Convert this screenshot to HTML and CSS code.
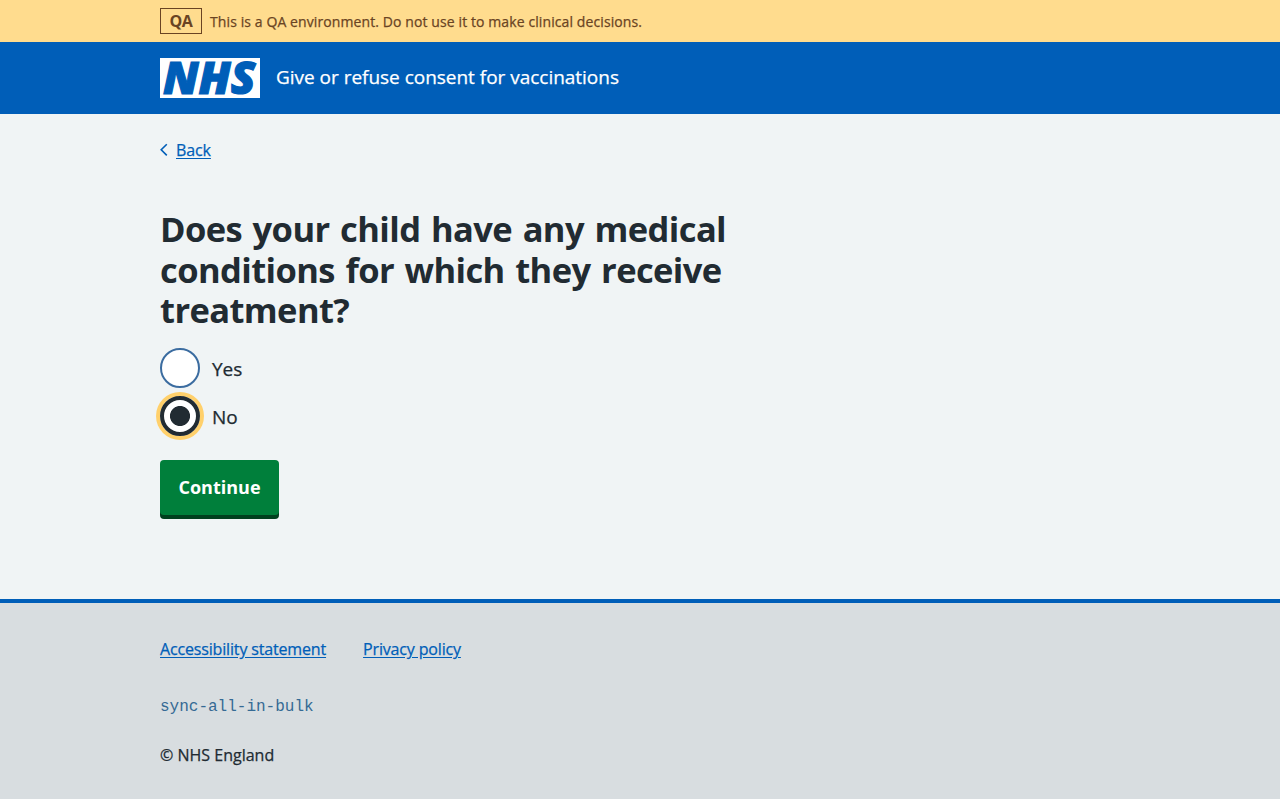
FILE: index.html
```html
<!DOCTYPE html>
<html lang="en">
<head>
<meta charset="utf-8">
<title>Give or refuse consent for vaccinations</title>
<link rel="stylesheet" href="styles.css">
</head>
<body>
<div class="environment">
  <div class="container environment-inner">
    <strong class="tag">QA</strong>
    <span class="environment-text">This is a QA environment. Do not use it to make clinical decisions.</span>
  </div>
</div>
<header class="header">
  <div class="container header-inner">
    <svg class="logo" width="100" height="40" viewBox="0 0 100 40" role="img" aria-label="NHS">
      <rect width="100" height="40" fill="#fff"/>
      <text class="logo-text" x="3" y="35.8" textLength="92.5" lengthAdjust="spacingAndGlyphs">NHS</text>
    </svg>
    <span class="service">Give or refuse consent for vaccinations</span>
  </div>
</header>
<main class="container main">
  <div class="back">
    <svg class="chevron" width="8" height="14" viewBox="0 0 8 14" aria-hidden="true"><path d="M6.8 1.2 1.2 6.8l5.6 5.6" fill="none" stroke="#005eb8" stroke-width="1.6"/></svg>
    <a class="link back-link" href="#">Back</a>
  </div>
  <form>
    <h1 class="title">Does your child have any medical<br>conditions for which they receive<br>treatment?</h1>
    <div class="radios">
      <label class="radio"><input class="radio-input" type="radio" name="condition"><span class="radio-text">Yes</span></label>
      <label class="radio"><input class="radio-input" type="radio" name="condition" checked><span class="radio-text">No</span></label>
    </div>
    <button class="button" type="button">Continue</button>
  </form>
</main>
<footer class="footer">
  <div class="container">
    <nav class="footer-links">
      <a class="link" href="#">Accessibility statement</a>
      <a class="link" href="#">Privacy policy</a>
    </nav>
    <code class="version">sync-all-in-bulk</code>
    <p class="copyright">© NHS England</p>
  </div>
</footer>
</body>
</html>
```
FILE: styles.css
```css
* { box-sizing: border-box; }
body {
  margin: 0;
  min-height: 799px;
  display: flex;
  flex-direction: column;
  background: #f0f4f5;
  color: #212b32;
  font-family: "Open Sans", "Noto Sans", sans-serif;
  font-size: 16px;
  line-height: 24px;
}
.container { width: 960px; margin: 0 auto; }
.environment { background: #ffdc8e; color: #6a4423; }
.environment-inner { display: flex; align-items: center; gap: 8px; height: 42px; }
.tag {
  width: 42px;
  height: 26px;
  border: 1px solid #6a4423;
  font-size: 16px;
  font-weight: 700;
  letter-spacing: -.4px;
  line-height: 24px;
  text-align: center;
}
.environment-text { padding-top: 2px; font-size: 14px; letter-spacing: .1px; white-space: nowrap; }
.environment-text, .service, .link, .radio-text, .copyright { -webkit-text-stroke: .25px currentColor; }
.header { background: #005eb8; color: #fff; }
.header-inner { display: flex; align-items: center; gap: 16px; height: 72px; }
.logo { display: block; }
.logo-text {
  fill: #005eb8;
  stroke: #005eb8;
  stroke-width: 1.2px;
  font-family: "Open Sans", sans-serif;
  font-size: 45px;
  font-style: italic;
  font-weight: 800;
}
.service { padding-bottom: 2px; font-size: 19px; line-height: 28px; letter-spacing: -.02px; white-space: nowrap; }
.main { height: 485px; padding-top: 24px; }
.back { display: flex; align-items: center; gap: 8px; height: 24px; }
.back-link { letter-spacing: -.1px; }
.chevron { display: block; }
.link { color: #005eb8; text-decoration: underline; text-underline-offset: 2px; }
.title {
  margin: 47px 0 0;
  font-size: 34.5px;
  line-height: 40.5px;
  font-weight: 700;
  letter-spacing: -.6px;
  word-spacing: 2.2px;
  white-space: nowrap;
}
.radios { display: grid; gap: 8px; margin-top: 17px; }
.radio { display: flex; align-items: center; gap: 12px; height: 40px; font-size: 19px; }
.radio-text { padding-top: 2px; }
.radio-input {
  appearance: none;
  width: 40px;
  height: 40px;
  margin: 0;
  border: 2px solid #3b6ca0;
  border-radius: 50%;
  background: #fff;
}
.radio-input:checked {
  border: 4px solid #212b32;
  background: radial-gradient(circle, #212b32 9.6px, #fff 10.4px);
  box-shadow: 0 0 0 4px #ffd06b;
}
.button {
  display: block;
  width: 119px;
  height: 55px;
  margin-top: 24px;
  padding: 0;
  border: 0;
  border-radius: 4px;
  background: #007f3b;
  box-shadow: 0 4px 0 #00401e;
  color: #fff;
  font: 700 18px/28px "Open Sans", sans-serif;
}
.footer { flex: 1; border-top: 4px solid #005eb8; background: #d8dde0; padding-top: 34px; }
.footer-links { display: flex; gap: 37px; height: 24px; letter-spacing: -.16px; white-space: nowrap; }
.version { display: block; margin-top: 34px; font-family: "Liberation Mono", monospace; font-size: 16px; line-height: 24px; color: #356a94; }
.copyright { margin: 24px 0 0; }
```
